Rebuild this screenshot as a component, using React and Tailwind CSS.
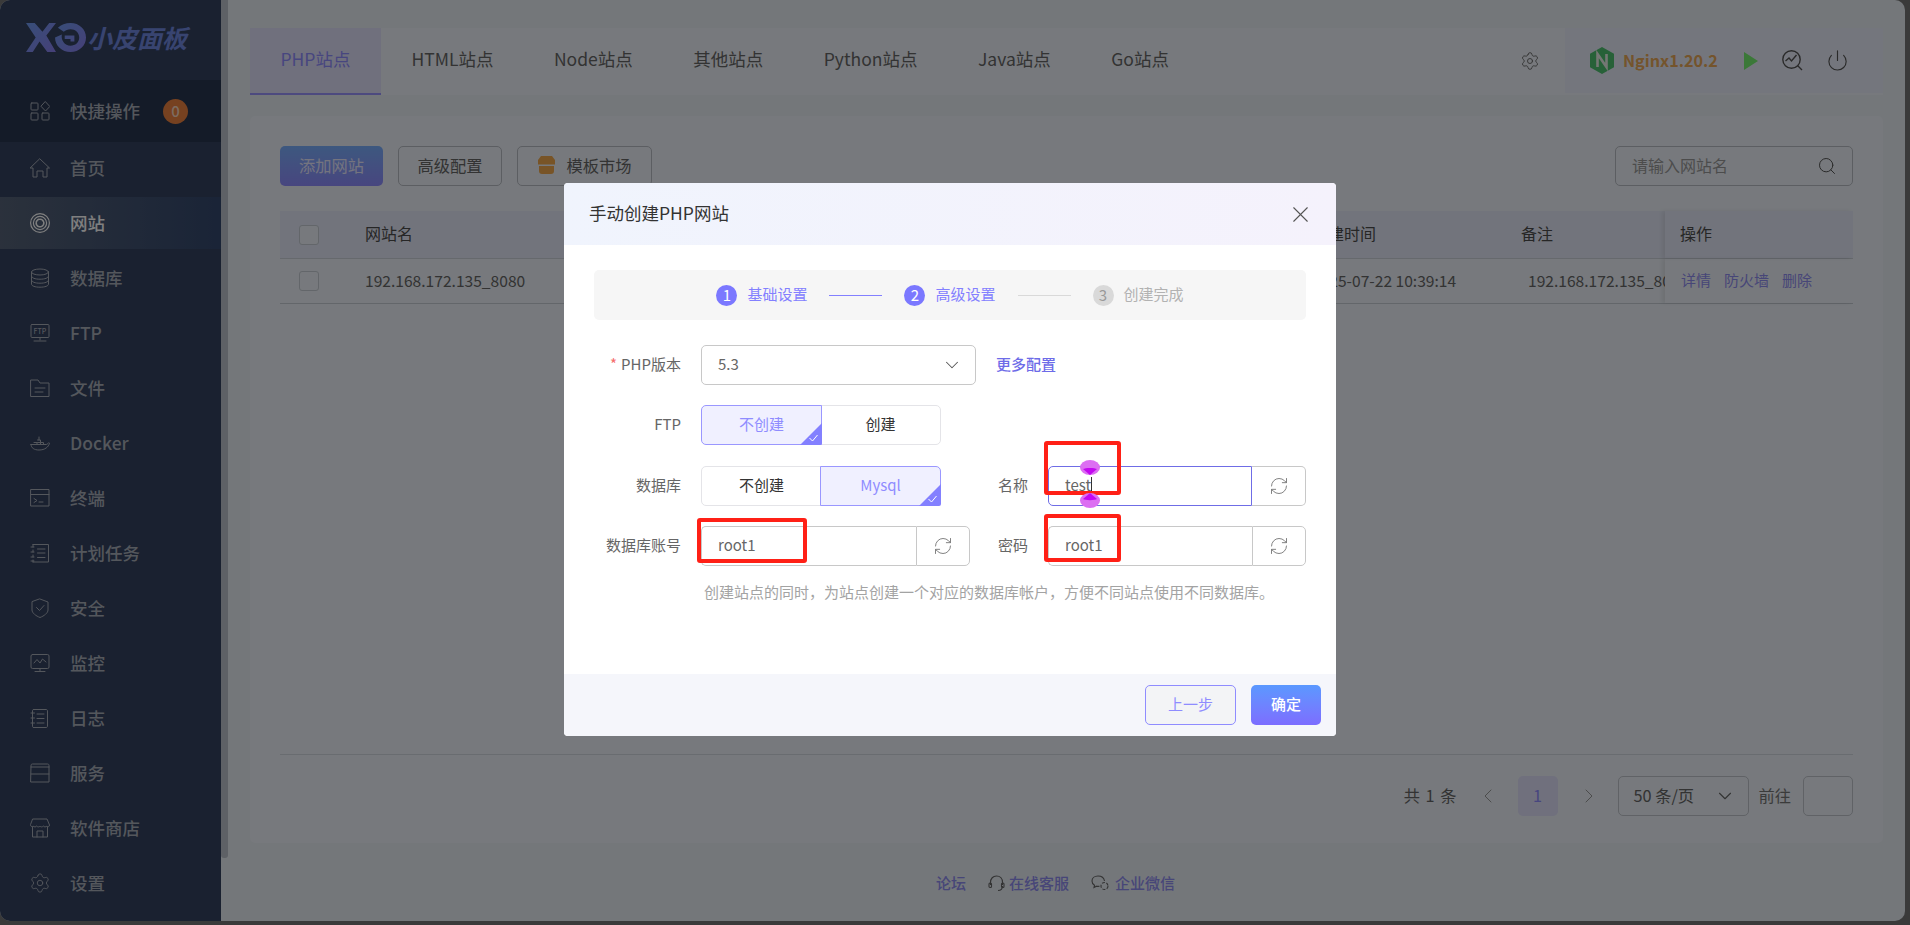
import React from "react";
import { ChevronDown, ChevronLeft, ChevronRight, Power, RefreshCw, Search, Settings, X } from "lucide-react";

const Ic = ({ children }) => (
  <svg width="20" height="20" viewBox="0 0 20 20" fill="none" stroke="currentColor" strokeWidth="1" strokeLinejoin="round" strokeLinecap="round" className="shrink-0">
    {children}
  </svg>
);

const menuIcons = {
  home: <path d="M10 1 L19.5 10 H17 V19 H13 V13 H7 V19 H3 V10 H.5 Z" />,
  site: (
    <>
      <circle cx="10" cy="10" r="9.4" strokeWidth="1.2" />
      <circle cx="10" cy="10" r="6.6" strokeWidth="1.2" />
      <circle cx="10" cy="10" r="3.8" strokeWidth="1.6" strokeDasharray="1.5 1" />
    </>
  ),
  db: (
    <>
      <ellipse cx="10" cy="4" rx="8.5" ry="3" />
      <path d="M1.5 4 V16 C1.5 18 5 19.2 10 19.2 S18.5 18 18.5 16 V4 M1.5 8 C1.5 10 5 11.2 10 11.2 S18.5 10 18.5 8 M1.5 12 C1.5 14 5 15.2 10 15.2 S18.5 14 18.5 12" />
    </>
  ),
  ftp: (
    <>
      <rect x="1" y="1.5" width="18" height="13" rx="1" />
      <path d="M10 14.5 V17 M4 18 H16" />
      <text x="10" y="11" textAnchor="middle" fontSize="7" stroke="none" fill="currentColor">FTP</text>
    </>
  ),
  file: <path d="M1 2 H8 L10 5 H19 V18.5 H1 Z M5 10 H15 M5 14 H13" />,
  docker: (
    <>
      <path d="M1 11.5 H16 C17 11.5 18 10.5 18.5 9.8 L19.5 10.2 C18.5 14 15 17 9 17 C4 17 1.2 15 1 11.5 Z" />
      <path d="M4 9.5 H7 V11.5 M7.5 9.5 H10.5 V11.5 M11 9.5 H13.5 V11.5 M7.5 7 H10.5 V9.5 M9 4 V7" />
    </>
  ),
  term: <path d="M1 1.5 H19 V18 H1 Z M1 6.5 H19 M4 10.5 L7 12.5 L4 14.5 M9 14 H13" />,
  task: <path d="M3 1.5 H18.5 V19 H3 M3 1.5 V4 M3 7 V9 M3 12 V14 M3 17 V19 M1 4 H4 M1 9 H4 M1 14 H4 M1 18 H4 M7.5 6 H15 M7.5 10 H15 M7.5 14.5 H15" />,
  safe: <path d="M10 1 L18 4 V12 C18 15 14 18 10 19.5 C6 18 2 15 2 12 V4 Z M6.5 9.5 L9.5 12.5 L14 7.5" />,
  monitor: (
    <>
      <rect x="1" y="1.5" width="18" height="14" rx="1.5" />
      <path d="M4 10 L7 6.5 L10 10 L12.5 6 L16 9 M10 15.5 V18 M5 18.5 H15" />
    </>
  ),
  log: <path d="M3.5 1.5 H16 C17 1.5 17.5 2 17.5 3 V18 C17.5 19 17 19.5 16 19.5 H3.5 M3.5 1.5 C2.8 1.5 2.5 2 2.5 3 V18 C2.5 19 2.8 19.5 3.5 19.5 M1 5 H4.5 M1 10 H4.5 M1 15 H4.5 M7 6 H14 M7 10.5 H14 M7 15 H14" />,
  server: <path d="M1 2.5 C1 1.5 1.5 1 2.5 1 H17.5 C18.5 1 19 1.5 19 2.5 V19 H1 Z M1 4 H19 M1 11 H19" />,
  store: <path d="M3 1 H17 L19.5 7 C19.5 9 17.5 9 17 8 C16 9.2 14 9.2 13.3 8 C12.5 9.2 10.5 9.2 10 8 C9.5 9.2 7.5 9.2 6.7 8 C6 9.2 4 9.2 3 8 C2.5 9 .5 9 .5 7 Z M2.5 9 V19 H17.5 V9 M7 19 V13 H13 V19" />,
};

const menu = [
  ["首页", "home"],
  ["网站", "site", true],
  ["数据库", "db"],
  ["FTP", "ftp"],
  ["文件", "file"],
  ["Docker", "docker"],
  ["终端", "term"],
  ["计划任务", "task"],
  ["安全", "safe"],
  ["监控", "monitor"],
  ["日志", "log"],
  ["服务", "server"],
  ["软件商店", "store"],
];

const Logo = () => (
  <div className="h-[80px] pl-[26px] pt-[23px] flex items-start">
    <svg width="60" height="30" viewBox="0 0 62 31" className="shrink-0">
      <defs>
        <linearGradient id="lg" x1="0" y1="0" x2="1" y2="1">
          <stop offset="0" stopColor="#6f9cf0" />
          <stop offset="1" stopColor="#8c80f0" />
        </linearGradient>
      </defs>
      <path d="M0 0 H9 L17 9 L24 0 H31 L21 13 L31 30 H22 L14 19 L7 30 H0 L10 15 Z" fill="url(#lg)" />
      <path fillRule="evenodd" d="M46 0 C55 0 62 6.5 62 15 C62 23.500 55 30 46 30 C37 30 30 23.500 30 15 L37 12 C36 18 40 23.500 46 23.500 C51 23.500 55 20 55 15 C55 10 51 6.500 46 6.500 C43 6.500 41 7.500 39 9 L33 5 C36 2 41 0 46 0 Z M40 13 H50 V19 H46 V16.500 H40 Z" fill="url(#lg)" />
    </svg>
    <span className="text-[25px] leading-[29px] font-bold italic text-[#7088e0] ml-[1px] whitespace-nowrap">小皮面板</span>
  </div>
);

const Sidebar = () => (
  <aside className="w-[221px] shrink-0 bg-[#344260] text-[#a8aeb9] text-[17.5px] font-medium">
    <Logo />
    <div className="h-[62px] bg-[#283650] flex items-center pl-[30px]">
      <Ic>
        <rect x="1" y="2" width="7" height="7" rx=".8" />
        <rect x="1" y="12" width="7" height="7" rx=".8" />
        <rect x="12" y="12" width="7" height="7" rx=".8" />
        <path d="M15.500 .8 L19.800 5.500 L15.500 10 L11.200 5.500 Z" />
      </Ic>
      <span className="ml-[20px]">快捷操作</span>
      <span className="ml-[23px] w-[25px] h-[25px] rounded-full bg-[#ec8240] text-white/70 text-[15px] flex items-center justify-center">0</span>
    </div>
    <nav className="flex flex-col gap-[3px]">
      {menu.map(([label, icon, active]) => (
        <div
          key={label}
          className={`h-[52px] flex items-center pl-[30px] ${active ? "bg-gradient-to-r from-[#566378] to-[#34486e] text-white" : ""}`}
        >
          <Ic>{menuIcons[icon]}</Ic>
          <span className="ml-[20px]">{label}</span>
        </div>
      ))}
      <div className="h-[52px] flex items-center pl-[30px]">
        <Settings size={22} strokeWidth={1} className="shrink-0 -ml-[1px]" />
        <span className="ml-[19px]">设置</span>
      </div>
    </nav>
  </aside>
);

const tabs = ["HTML站点", "Node站点", "其他站点", "Python站点", "Java站点", "Go站点"];

const TopBar = () => (
  <div className="h-[67px] flex bg-[#eef3fa]">
    <div className="h-[67px] w-[131px] flex items-center justify-center pb-[3px] text-[#8f8cff] text-[17.5px] bg-[#e0e0fa] border-b-[2px] border-[#9a94ff]">
      PHP站点
    </div>
    {tabs.map((t) => (
      <div key={t} className="h-[65px] ml-[0.5px] px-[30px] pb-[2px] flex items-center text-[17.5px] text-[#666] whitespace-nowrap">
        {t}
      </div>
    ))}
    <div className="ml-auto flex items-center pr-[25px] h-[65px]">
      <Settings size={20} strokeWidth={1.1} className="text-[#666]" />
    </div>
    <div className="w-[318px] h-[65px] bg-[#e9edfb] flex items-center pl-[25px]">
      <svg width="24" height="27" viewBox="0 0 24 27" className="shrink-0">
        <path d="M12 0 L24 6.700 V20.300 L12 27 L0 20.300 V6.700 Z" fill="#4fc270" />
        <path d="M7.500 20 V7 L16.500 20 V7" fill="none" stroke="#e8efe8" strokeWidth="2.600" />
      </svg>
      <span className="ml-[9px] w-[97px] text-[16.2px] font-bold text-[#e8a858] leading-none whitespace-nowrap">Nginx1.20.2</span>
      <svg width="14" height="18" viewBox="0 0 14 18" className="ml-[24px] shrink-0">
        <path d="M0 0 L14 9 L0 18 Z" fill="#76f070" />
      </svg>
      <svg width="21" height="21" viewBox="0 0 21 21" fill="none" stroke="#555" strokeWidth="1.400" className="ml-[24px] shrink-0">
        <circle cx="9.500" cy="9.500" r="8.700" />
        <path d="M3.500 11 L7 8 L9.500 11 L14.500 5 M15.500 15.500 L20 20" />
      </svg>
      <Power size={23} strokeWidth={1.200} className="ml-[23px] text-[#555]" />
    </div>
  </div>
);

const Check = () => <span className="w-[20px] h-[20px] rounded-[3px] border border-[#c6ccd4] bg-[#eef3fa] block" />;

const OutlineBtn = ({ children, className = "" }) => (
  <div className={`h-[40px] pb-[2px] rounded-[5px] border border-[#b8bcc4] flex items-center justify-center text-[16.25px] text-[#666] ${className}`}>
    {children}
  </div>
);

const Panel = () => (
  <div className="mt-[21px] h-[727px] bg-[#eef3fa] rounded-[5px] px-[30px] pt-[30px] flex flex-col">
    <div className="flex items-center h-[40px]">
      <div className="w-[103px] h-[40px] pb-[2px] rounded-[5px] bg-gradient-to-b from-[#7ab0ff] to-[#8f8cff] text-[#e8e8ff] text-[16.25px] flex items-center justify-center">添加网站</div>
      <OutlineBtn className="w-[104px] ml-[15px]">高级配置</OutlineBtn>
      <OutlineBtn className="w-[135px] ml-[15px]">
        <svg width="17" height="18" viewBox="0 0 17 18" className="mr-[12px]">
          <path d="M3 0 H14 L17 4 V8.500 H0 V4 Z" fill="#f0a94e" />
          <path d="M1 10 H16 V15 C16 17 15 18 13 18 H4 C2 18 1 17 1 15 Z" fill="#f0a94e" />
        </svg>
        模板市场
      </OutlineBtn>
      <div className="ml-auto w-[238px] h-[40px] rounded-[5px] border border-[#b8bcc4] flex items-center justify-between pl-[16px] pr-[15px] text-[16px] text-[#999]">
        <span className="pb-[2px]">请输入网站名</span>
        <Search size={20} strokeWidth={1.200} className="text-[#555]" />
      </div>
    </div>

    <div className="mt-[25px] flex-1 border-b border-[#d2d8e0]">
      <div className="h-[48px] flex items-center bg-[#e4e9f8] border-b border-[#ccd2da] text-[16px] text-[#4d4d4d]">
        <div className="w-[85px] pl-[19px]"><Check /></div>
        <div className="w-[947px] pb-[3px]">网站名</div>
        <div className="w-[209px] pb-[3px]">创建时间</div>
        <div className="w-[144px] pb-[3px]">备注</div>
        <div className="flex-1 self-stretch flex items-center pl-[15px] pb-[3px] shadow-[-3px_0_4px_rgba(0,0,0,.08)]">操作</div>
      </div>
      <div className="h-[45px] flex items-center border-b border-[#c6ccd4] text-[15.6px] text-[#666]">
        <div className="w-[85px] pl-[19px]"><Check /></div>
        <div className="w-[947px] pb-[1px]">192.168.172.135_8080</div>
        <div className="w-[209px] pb-[1px]">2025-07-22 10:39:14</div>
        <div className="w-[144px] pb-[1px] pl-[7px] overflow-hidden whitespace-nowrap">192.168.172.135_8080</div>
        <div className="flex-1 self-stretch flex items-center pl-[16px] pb-[1px] gap-[13px] text-[15px] text-[#8f8cf0] shadow-[-3px_0_4px_rgba(0,0,0,.08)]">
          <span>详情</span>
          <span>防火墙</span>
          <span>删除</span>
        </div>
      </div>
    </div>

    <div className="mt-[21px] mb-[27px] h-[40px] flex items-center justify-end text-[#666] text-[16.25px]">
      <span className="whitespace-pre pb-[2px] [word-spacing:2px]">共 1 条</span>
      <ChevronLeft size={24} strokeWidth={1} className="ml-[19px] text-[#999]" />
      <span className="ml-[18px] w-[40px] h-[40px] pb-[2px] rounded-[5px] bg-[#e0e0fa] text-[#8f8cff] flex items-center justify-center">1</span>
      <ChevronRight size={24} strokeWidth={1} className="ml-[19px] text-[#999]" />
      <div className="ml-[17px] w-[131px] h-[40px] rounded-[5px] border border-[#c0c4cc] flex items-center justify-between pl-[15px] pr-[12px] whitespace-pre">
        <span className="pb-[2px]">50 条/页</span>
        <ChevronDown size={22} strokeWidth={1.200} />
      </div>
      <span className="ml-[10px] pb-[2px] text-[#777]">前往</span>
      <div className="ml-[12px] w-[50px] h-[40px] rounded-[5px] border border-[#c0c4cc]" />
    </div>
  </div>
);

const Footer = () => (
  <div className="mt-[28px] pl-[686px] flex items-center h-[24px] text-[15px] font-medium text-[#8f8cf0] whitespace-nowrap">
    <span>论坛</span>
    <svg width="17" height="17" viewBox="0 0 17 17" fill="none" stroke="#666" strokeWidth="1.100" className="ml-[22px]">
      <path d="M2.500 10 V7.500 C2.500 3.500 5 1 8.500 1 S14.500 3.500 14.500 7.500 V10 M14.500 11 C14.500 14 12.500 15.500 10 15.500" />
      <rect x="1" y="8" width="2.500" height="4.500" rx="1" />
      <rect x="13.500" y="8" width="2.500" height="4.500" rx="1" />
    </svg>
    <span className="ml-[4px]">在线客服</span>
    <svg width="18" height="16" viewBox="0 0 18 16" fill="none" stroke="#666" strokeWidth="1.100" className="ml-[22px]">
      <path d="M13.500 6 C13 3 10.500 1 7 1 C3.500 1 1 3.200 1 6 C1 8 2 9.500 3.500 10.300 L3 12.500 L5.500 11.200 C6.500 11.400 7.500 11.400 8.500 11.300" />
      <circle cx="13.500" cy="11" r="3.500" strokeDasharray="3 1.500" />
    </svg>
    <span className="ml-[6px]">企业微信</span>
  </div>
);

const Corner = () => (
  <svg width="22" height="22" viewBox="0 0 22 22" className="absolute right-[-1px] bottom-[-1px]">
    <path d="M22 0 V20 Q22 22 20 22 H0 Z" fill="#8380ff" />
    <path d="M9.500 15 L12.500 18 L17.500 12" fill="none" stroke="#fff" strokeWidth="1" />
  </svg>
);

const RadioGroup = ({ active }) => {
  const items = active === 0 ? ["不创建", "创建"] : ["不创建", "Mysql"];
  return (
    <div className="flex w-[240px] h-[40px] text-[15px]">
      {items.map((t, i) => (
        <div
          key={t}
          className={`relative flex-1 flex items-center justify-center pb-[1px] border ${i === 0 ? "rounded-l-[5px] -mr-[1px]" : "rounded-r-[5px] -ml-[1px]"} ${i === active ? "z-10 border-[#9a97ff] bg-[#f0f0ff] text-[#8f8cff]" : "border-[#e4e4e8] text-[#333]"}`}
        >
          {t}
          {i === active && <Corner />}
        </div>
      ))}
    </div>
  );
};

const InputAddon = ({ value, width, focus, caret }) => (
  <div className={`flex h-[40px] ${width} text-[15px] text-[#666]`}>
    <div className={`flex-1 flex items-center pl-[16px] pb-[1px] border rounded-l-[5px] ${focus ? "border-[#6f6de6]" : "border-[#c8c8c8] border-r-0"}`}>
      {value}
      {caret && <span className="w-[1px] h-[17px] bg-[#333]" />}
    </div>
    <div className={`w-[54px] flex items-center justify-center border border-[#c8c8c8] rounded-r-[5px] ${focus ? "border-l-0" : ""}`}>
      <RefreshCw size={20} strokeWidth={1.100} className="text-[#777]" />
    </div>
  </div>
);

const Label = ({ children, className = "w-[87px]" }) => (
  <div className={`${className} shrink-0 pb-[2px] text-right text-[15px] text-[#666] whitespace-nowrap`}>{children}</div>
);

const Step = ({ n, label, on }) => (
  <div className={`flex items-center text-[15px] whitespace-nowrap ${on ? "text-[#8380ff]" : "text-[#b2b2b2]"}`}>
    <span className={`w-[21px] h-[21px] rounded-full flex items-center justify-center ${on ? "bg-[#7b78ff] text-white" : "bg-[#d9d9d9] text-[#999]"}`}>{n}</span>
    <span className="ml-[10px] pb-[1px]">{label}</span>
  </div>
);

const Dialog = () => (
  <div className="ml-[564px] mt-[183px] w-[772px] h-[553px] bg-white rounded-[4px] overflow-hidden flex flex-col">
    <div className="h-[62px] shrink-0 flex items-center justify-between pl-[25px] pr-[22px] bg-gradient-to-r from-[#f0f4fd] to-[#f5f2fc]">
      <span className="text-[17.500px] text-[#333] pb-[2px]">手动创建PHP网站</span>
      <X size={27} strokeWidth={1} className="text-[#555]" />
    </div>
    <div className="flex-1 px-[30px] pt-[25px]">
      <div className="h-[50px] rounded-[5px] bg-[#f6f6f6] flex items-center justify-center">
        <Step n="1" label="基础设置" on />
        <span className="w-[53px] h-[1px] mx-[22px] bg-[#8380ff]" />
        <Step n="2" label="高级设置" on />
        <span className="w-[53px] h-[1px] mx-[22px] bg-[#d9d9d9]" />
        <Step n="3" label="创建完成" />
      </div>

      <div className="mt-[25px] flex items-center h-[40px]">
        <Label><span className="text-[#f56c6c] mr-[4px]">*</span>PHP版本</Label>
        <div className="ml-[20px] w-[275px] h-[40px] border border-[#c8c8c8] rounded-[5px] flex items-center justify-between pl-[16px] pr-[12px] text-[15px] text-[#666]">
          <span className="pb-[1px]">5.3</span>
          <ChevronDown size={22} strokeWidth={1.100} className="text-[#555]" />
        </div>
        <span className="ml-[20px] pb-[2px] text-[15px] font-medium text-[#6d6be8]">更多配置</span>
      </div>

      <div className="mt-[20px] flex items-center h-[40px]">
        <Label>FTP</Label>
        <div className="ml-[20px]"><RadioGroup active={0} /></div>
      </div>

      <div className="mt-[21px] flex items-center h-[40px]">
        <Label>数据库</Label>
        <div className="ml-[20px] w-[269px]"><RadioGroup active={1} /></div>
        <Label className="w-[58px]">名称</Label>
        <div className="ml-[20px]"><InputAddon value="test" width="w-[258px]" focus caret /></div>
      </div>

      <div className="mt-[20px] flex items-center h-[40px]">
        <Label>数据库账号</Label>
        <div className="ml-[20px] w-[269px]"><InputAddon value="root1" width="w-[269px]" /></div>
        <Label className="w-[58px]">密码</Label>
        <div className="ml-[20px]"><InputAddon value="root1" width="w-[258px]" /></div>
      </div>

      <p className="mt-[15px] ml-[110px] text-[15px] leading-[22px] text-[#a3a3a3] whitespace-nowrap">
        创建站点的同时，为站点创建一个对应的数据库帐户，方便不同站点使用不同数据库。
      </p>
    </div>
    <div className="h-[62px] shrink-0 bg-[#f5f6fb] flex items-center justify-end pr-[15px]">
      <div className="w-[91px] h-[40px] pb-[1px] rounded-[5px] border border-[#8f8cff] bg-[#f3f4f6] text-[#8f8cff] text-[15px] flex items-center justify-center">上一步</div>
      <div className="ml-[15px] w-[70px] h-[40px] pb-[1px] rounded-[5px] bg-gradient-to-b from-[#5a98ff] to-[#7c6dff] text-white text-[15px] font-medium flex items-center justify-center">确定</div>
    </div>
  </div>
);

const Handle = ({ className, flip }) => (
  <svg width="20" height="15" viewBox="0 0 20 15" className={`absolute ${className}`}>
    <g transform={flip ? "translate(0 15) scale(1 -1)" : undefined}>
      <ellipse cx="10" cy="7.500" rx="10" ry="7.500" fill="#dc6ef2" />
      <path d="M3 9 C5 7.500 15 7.500 17 9 L10 15 Z" fill="#c308f0" />
    </g>
  </svg>
);

const Annotations = () => (
  <>
    <div className="absolute left-[1044px] top-[441px] w-[77px] h-[54px] border-[4px] border-[#ff2016] rounded-[3px]" />
    <div className="absolute left-[697px] top-[518px] w-[110px] h-[45px] border-[4px] border-[#ff2016] rounded-[3px]" />
    <div className="absolute left-[1044px] top-[514px] w-[77px] h-[48px] border-[4px] border-[#ff2016] rounded-[3px]" />
    <Handle className="left-[1080px] top-[460px]" />
    <Handle className="left-[1080px] top-[493px]" flip />
  </>
);

const App = () => {
  return (
    <div className="relative w-[1910px] h-[925px] overflow-hidden bg-[#747474] font-['Noto_Sans_CJK_SC','Noto_Sans',sans-serif]">
      <div className="w-[1905px] h-[921px] rounded-[10px] overflow-hidden flex bg-[#e8eef5]">
        <Sidebar />
        <div className="relative flex-1 min-w-0 pl-[29px] pr-[22px] pt-[28px]">
          <div className="absolute left-0 top-0 w-[7px] h-[858px] rounded-b-[3px] bg-[#bcc3cc]" />
          <TopBar />
          <Panel />
          <Footer />
        </div>
      </div>
      <div className="absolute inset-0 bg-black/50">
        <Dialog />
        <Annotations />
      </div>
    </div>
  );
};

export default App;
